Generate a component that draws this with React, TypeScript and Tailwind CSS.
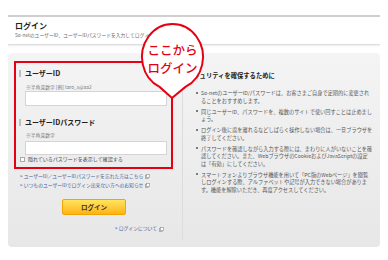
import React from "react";

const JP = { fontFamily: '"Noto Sans CJK JP", "Noto Sans", "Liberation Sans", sans-serif' };

function Ext() {
  return (
    <svg width="5" height="5" viewBox="0 0 5 5" className="inline-block ml-[2px] align-middle">
      <rect x="0.5" y="1.5" width="3" height="3" fill="none" stroke="#999" strokeWidth="0.7" />
      <rect x="1.5" y="0.5" width="3" height="3" fill="#fff" stroke="#999" strokeWidth="0.7" />
    </svg>
  );
}

const bullets: string[][] = [
  ["So-netのユーザーID/パスワードは、お客さまご自身で定期的に変更され", "ることをおすすめします。"],
  ["同じユーザーID、パスワードを、複数のサイトで使い回すことは止めまし", "ょう。"],
  ["ログイン後に席を離れるなどしばらく操作しない場合は、一旦ブラウザを", "終了してください。"],
  [
    "パスワードを確認しながら入力する際には、まわりに人がいないことを確",
    "認してください。また、WebブラウザのCookieおよびJavaScriptの設定",
    "は「有効」にしてください。",
  ],
  [
    "スマートフォンよりブラウザ機能を用いて「PC版のWebページ」を閲覧",
    "しログインする際、アルファベットや記号が入力できない場合がありま",
    "す。機能を解除いただき、再度アクセスしてください。",
  ],
];

export default function App() {
  return (
    <div className="w-[388px] h-[260px] relative bg-white overflow-hidden" style={JP}>
      <div className="px-2 pt-[15px]">
        <div className="border-t-2 border-[#cfcfcf]">
          <div className="pl-[7px] pt-[4px]">
            <div className="text-[8px] leading-[10px] font-bold text-[#222]">ログイン</div>
            <div className="mt-[1px] text-[4.8px] leading-[6px] text-[#666] whitespace-nowrap">
              So-netのユーザーID、ユーザーIDパスワードを入力してログインしてください。
            </div>
          </div>
        </div>
        <div className="mt-[6px] h-px bg-[#dedede] shadow-[0_1px_2px_rgba(0,0,0,0.12)]" />

        <div className="mt-[8px] h-[194px] rounded-[4px] bg-linear-to-b from-[#f4f4f4] to-[#e7e7e7] flex">
          {/* left column */}
          <div className="w-[174px] pl-[6px] pt-[8px]">
            <div className="w-[159px] h-[108px] border-2 border-[#e60012]">
              <div className="mt-[6px] pl-[3px] flex items-center gap-[4px]">
                <div className="w-[2px] h-[7px] bg-[#bdbdbd]" />
                <div className="text-[7px] leading-[8px] font-bold text-[#222]">ユーザーID</div>
              </div>
              <div className="mt-[7px] ml-[10px] text-[4.8px] leading-[6px] text-[#777] whitespace-nowrap">
                ※半角英数字 [例] taro_s@aa2
              </div>
              <div className="mt-[1px] ml-[9px] w-[142px] h-[15px] bg-white border border-[#d4d4d4]" />

              <div className="mt-[12px] pl-[3px] flex items-center gap-[4px]">
                <div className="w-[2px] h-[7px] bg-[#bdbdbd]" />
                <div className="text-[7px] leading-[8px] font-bold text-[#222]">ユーザーIDパスワード</div>
              </div>
              <div className="mt-[6px] ml-[10px] text-[4.8px] leading-[6px] text-[#777] whitespace-nowrap">
                ※半角英数字
              </div>
              <div className="mt-[3px] ml-[9px] w-[142px] h-[14px] bg-white border border-[#d4d4d4]" />
              <div className="mt-[1px] ml-[4px] flex items-center gap-[3px] h-[6px]">
                <div className="w-[5px] h-[5px] bg-white border border-[#aaa]" />
                <div className="text-[5px] leading-[6px] text-[#444] whitespace-nowrap">
                  隠れているパスワードを表示して確認する
                </div>
              </div>
            </div>

            <div className="mt-[3px] ml-[6px] text-[4.8px] leading-[7px] text-[#41609e] whitespace-nowrap">
              &gt; ユーザーID／ユーザーIDパスワードを忘れた方はこちら
              <Ext />
            </div>
            <div className="mt-[2px] ml-[6px] text-[4.8px] leading-[7px] text-[#41609e] whitespace-nowrap">
              &gt; いつものユーザーIDでログイン出来ない方へのお知らせ
              <Ext />
            </div>

            <div className="mt-[11px] ml-[48px] w-[64px] h-[16px] rounded-[2px] border border-[#f0a500] bg-linear-to-b from-[#ffe45c] to-[#ffb300] flex items-center justify-center">
              <span className="text-[6.5px] font-bold text-[#333] leading-none">ログイン</span>
            </div>

            <div className="mt-[10px] ml-[101px] text-[4.8px] leading-[6px] text-[#41609e] whitespace-nowrap">
              &gt; ログインについて
              <Ext />
            </div>
          </div>

          {/* right column */}
          <div className="flex-1 my-[7px] border-l border-[#dcdcdc] pl-[4px] pt-[12px]">
            <div className="text-[6.3px] leading-[8px] font-bold text-[#222] whitespace-nowrap">
              セキュリティを確保するために
            </div>
            <div className="mt-[9px]">
              {bullets.map((lines, i) => (
                <div key={i} className={`flex ml-[9px] ${i > 0 ? "mt-[3.5px]" : ""}`}>
                  <div className="w-[5px] shrink-0 h-[7.5px] flex items-center">
                    <div className="w-[1.6px] h-[1.6px] rounded-full bg-[#555]" />
                  </div>
                  <div className="text-[5.2px] leading-[7.5px] text-[#555] whitespace-nowrap">
                    {lines.map((l, j) => (
                      <div key={j}>{l}</div>
                    ))}
                  </div>
                </div>
              ))}
            </div>
          </div>
        </div>
      </div>

      {/* speech bubble overlay */}
      <svg
        className="absolute left-0 top-0 pointer-events-none"
        width="388"
        height="260"
        viewBox="0 0 388 260"
      >
        <path
          d="M 159.6 86.9 A 30.5 33 0 1 1 185.4 86.9 L 172 98 Z"
          fill="#fff"
          stroke="#e60012"
          strokeWidth="2"
          strokeLinejoin="miter"
        />
      </svg>
      <div className="absolute left-[142px] top-[41px] w-[61px] text-center text-[12.5px] leading-[17.5px] font-medium text-[#e60012]">
        <div>ここから</div>
        <div>ログイン</div>
      </div>
    </div>
  );
}
